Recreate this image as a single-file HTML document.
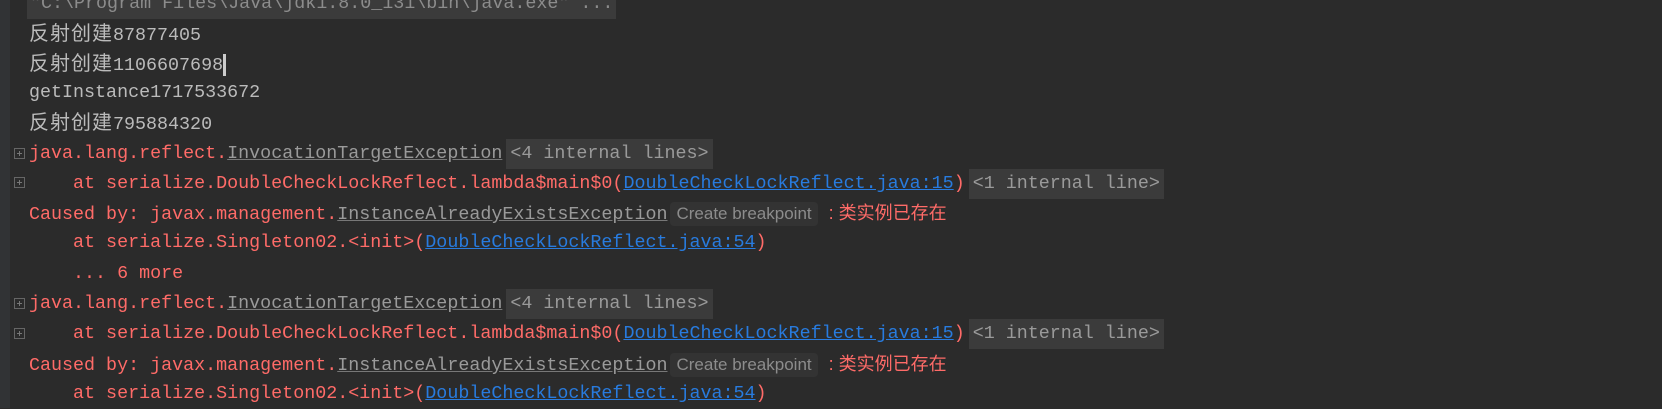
<!DOCTYPE html>
<html><head><meta charset="utf-8"><style>
body{margin:0;width:1662px;height:408px;background:#2b2b2b;overflow:hidden;position:relative;font-family:"Liberation Mono","Noto Sans CJK SC",monospace;font-size:18.35px;color:#bbbbbb}
.g{position:absolute;left:0;top:0;width:10px;height:408px;background:#313335}
.l{position:absolute;left:29px;height:30px;line-height:30px;white-space:pre}
.r{color:#ff6b68}
.u{color:#9a9a9a;text-decoration:underline;text-decoration-color:#777}
.a{color:#287bde;text-decoration:underline}
.f{background:#3b3b3b;color:#9a9a9a;padding:0 4px;margin-left:4px;display:inline-block;line-height:30px}
.bp{background:#333;color:#8c8c8c;font-family:"Liberation Sans",sans-serif;font-size:17px;padding:0 6px;border-radius:4px;margin-left:3px;display:inline-block;line-height:24px}
.cn{font-family:"Liberation Sans","Noto Sans CJK SC",sans-serif;font-size:18px}
.zh{font-family:"Liberation Sans","Noto Sans CJK SC",sans-serif;font-size:20px;letter-spacing:1px}
.fb{position:absolute;left:14px;width:9px;height:9px;border:1px solid #666}
.fb:before{content:"";position:absolute;left:2px;top:4px;width:5px;height:1px;background:#777}
.fb:after{content:"";position:absolute;left:4px;top:2px;width:1px;height:5px;background:#777}
.cur{display:inline-block;width:3px;height:22px;background:#ccc;vertical-align:middle}
</style></head><body>
<div class="g"></div>
<div class="l" style="top:-11px;background:#3b3b3b;color:#8c8c8c;left:27px;padding:0 3px">"C:\Program Files\Java\jdk1.8.0_131\bin\java.exe" ...</div>
<div class="l" style="top:19px"><span class="zh">反射创建</span>87877405</div>
<div class="l" style="top:49px"><span class="zh">反射创建</span>1106607698<span class="cur"></span></div>
<div class="l" style="top:78px">getInstance1717533672</div>
<div class="l" style="top:108px"><span class="zh">反射创建</span>795884320</div>
<div class="fb" style="top:148px"></div>
<div class="l r" style="top:139px">java.lang.reflect.<span class="u">InvocationTargetException</span><span class="f">&lt;4 internal lines&gt;</span></div>
<div class="fb" style="top:177px"></div>
<div class="l r" style="top:169px">    at serialize.DoubleCheckLockReflect.lambda$main$0(<span class="a">DoubleCheckLockReflect.java:15</span>)<span class="f">&lt;1 internal line&gt;</span></div>
<div class="l r" style="top:198px">Caused by: javax.management.<span class="u">InstanceAlreadyExistsException</span><span class="bp">Create breakpoint</span> <span class="cn">: 类实例已存在</span></div>
<div class="l r" style="top:228px">    at serialize.Singleton02.&lt;init&gt;(<span class="a">DoubleCheckLockReflect.java:54</span>)</div>
<div class="l r" style="top:259px">    ... 6 more</div>
<div class="fb" style="top:298px"></div>
<div class="l r" style="top:289px">java.lang.reflect.<span class="u">InvocationTargetException</span><span class="f">&lt;4 internal lines&gt;</span></div>
<div class="fb" style="top:328px"></div>
<div class="l r" style="top:319px">    at serialize.DoubleCheckLockReflect.lambda$main$0(<span class="a">DoubleCheckLockReflect.java:15</span>)<span class="f">&lt;1 internal line&gt;</span></div>
<div class="l r" style="top:349px">Caused by: javax.management.<span class="u">InstanceAlreadyExistsException</span><span class="bp">Create breakpoint</span> <span class="cn">: 类实例已存在</span></div>
<div class="l r" style="top:379px">    at serialize.Singleton02.&lt;init&gt;(<span class="a">DoubleCheckLockReflect.java:54</span>)</div>
</body></html>
